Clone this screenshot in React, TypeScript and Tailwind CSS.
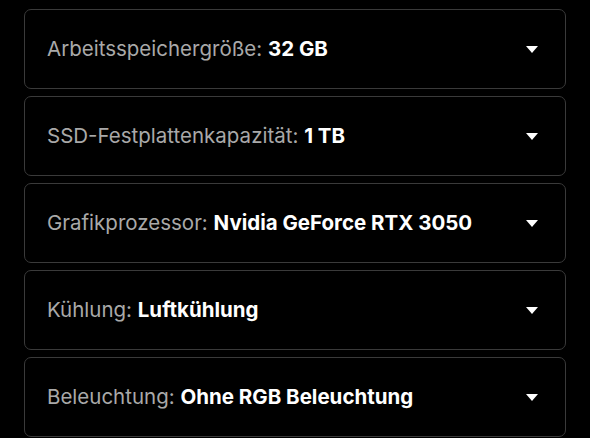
import React from "react";

const rows = [
  { label: "Arbeitsspeichergröße:", value: "32 GB" },
  { label: "SSD-Festplattenkapazität:", value: "1 TB" },
  { label: "Grafikprozessor:", value: "Nvidia GeForce RTX 3050" },
  { label: "Kühlung:", value: "Luftkühlung" },
  { label: "Beleuchtung:", value: "Ohne RGB Beleuchtung" },
];

export default function App() {
  return (
    <div
      className="w-[590px] h-[438px] bg-black overflow-hidden pt-[9px] px-[24px] flex flex-col gap-[7px]"
      style={{ fontFamily: "Inter, 'Liberation Sans', sans-serif" }}
    >
      {rows.map((r) => (
        <div
          key={r.label}
          className="h-[80px] shrink-0 rounded-[7px] border border-[#3a3a3a] bg-black flex items-center pl-[22px] pr-[27px]"
        >
          <div className="flex-1 text-[20.5px] leading-none">
            <span className="text-[#a9a9a9]">{r.label} </span>
            <span className="text-white font-bold">{r.value}</span>
          </div>
          <svg width="12" height="7" viewBox="0 0 12 7" className="shrink-0">
            <path d="M0 0 H12 L6 7 Z" fill="white" />
          </svg>
        </div>
      ))}
    </div>
  );
}
